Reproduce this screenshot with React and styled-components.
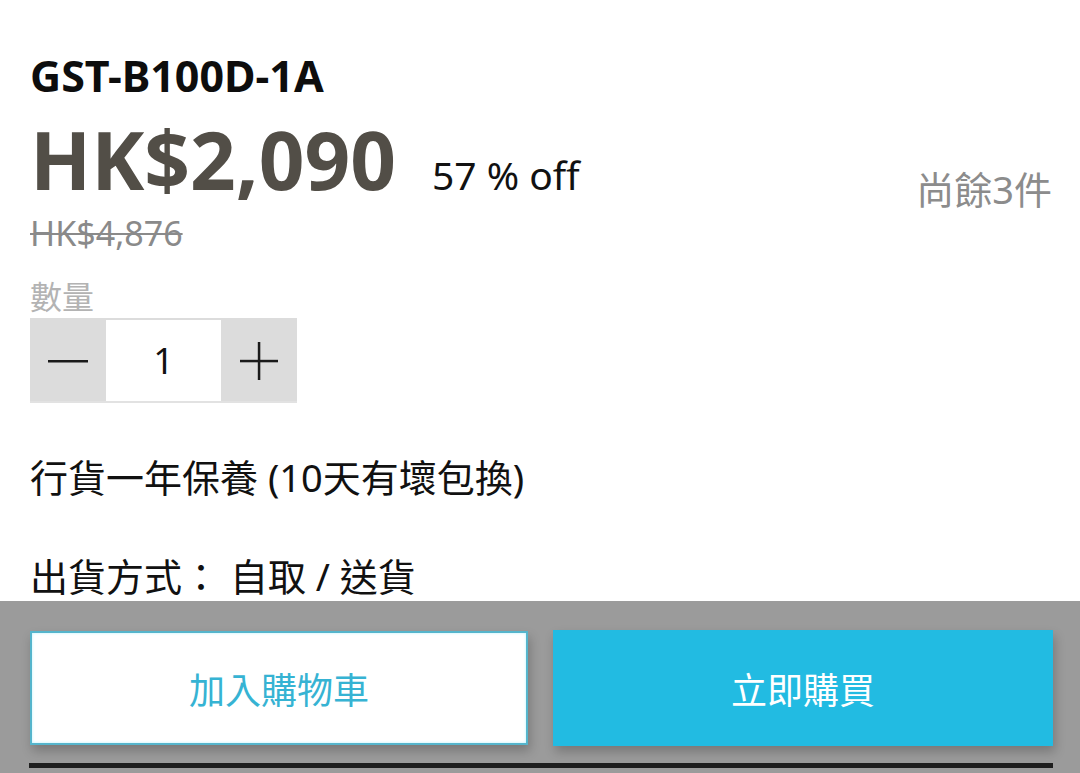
import styled, { createGlobalStyle } from 'styled-components';

const GlobalStyle = createGlobalStyle`
  html, body {
    margin: 0;
    padding: 0;
    background: #ffffff;
  }
  body {
    font-family: 'Noto Sans', 'Noto Sans CJK TC', sans-serif;
    color: #111111;
  }
`;

const Page = styled.div`
  width: 1080px;
  height: 773px;
  display: flex;
  flex-direction: column;
  overflow: hidden;
`;

const Content = styled.div`
  flex: 1;
  padding: 48px 28px 0 30px;
  display: flex;
  flex-direction: column;
`;

const Model = styled.h1`
  margin: 0;
  font-size: 43px;
  line-height: 56px;
  font-weight: 700;
  color: #0d0d0d;
`;

const PriceRow = styled.div`
  display: flex;
  align-items: baseline;
  margin-top: 10px;
  height: 90px;
`;

const Price = styled.span`
  font-size: 80px;
  line-height: 90px;
  font-weight: 700;
  color: #524e47;
`;

const Discount = styled.span`
  font-size: 39px;
  margin-left: 36px;
  color: #111111;
`;

const Stock = styled.span`
  margin-left: auto;
  font-size: 38px;
  color: #8c8c8c;
  position: relative;
  top: 14px;
`;

const OldPrice = styled.div`
  margin-top: 9px;
  font-size: 34px;
  line-height: 40px;
  color: #8a8a8a;
  text-decoration: line-through;
  text-decoration-thickness: 2px;
`;

const Label = styled.div`
  margin-top: 24px;
  font-size: 32px;
  line-height: 40px;
  color: #b3b3b3;
`;

const Stepper = styled.div`
  display: flex;
  width: 267px;
  height: 81px;
  margin-top: 1px;
  border-top: 2px solid #dcdcdc;
  border-bottom: 2px solid #e2e2e2;
`;

const StepButton = styled.div`
  width: 76px;
  background: #dcdcdc;
  display: flex;
  align-items: center;
  justify-content: center;
`;

const Qty = styled.div`
  flex: 1;
  display: flex;
  align-items: center;
  justify-content: center;
  font-size: 36px;
  color: #111111;
`;

const Info = styled.div`
  font-size: 38px;
  line-height: 48px;
  color: #111111;
  margin-top: ${(p) => p.$gap}px;
`;

const BottomBar = styled.div`
  height: 172px;
  background: #9b9b9b;
  padding: 29px 27px 0 30px;
  box-sizing: border-box;
  display: flex;
  flex-direction: column;
`;

const Buttons = styled.div`
  display: flex;
  align-items: center;
  gap: 25px;
`;

const ActionButton = styled.button`
  box-sizing: border-box;
  width: ${(p) => (p.$primary ? 500 : 498)}px;
  height: ${(p) => (p.$primary ? 116 : 114)}px;
  border: ${(p) => (p.$primary ? 'none' : '2px solid #55b5cc')};
  background: ${(p) => (p.$primary ? '#22bbe2' : '#ffffff')};
  color: ${(p) => (p.$primary ? '#ffffff' : '#36b3d3')};
  box-shadow: ${(p) =>
    p.$primary
      ? '2px 6px 10px rgba(0, 0, 0, 0.22)'
      : 'inset 0 0 3px #b8f2ff, 2px 6px 10px rgba(0, 0, 0, 0.22)'};
  font-family: 'Noto Sans CJK TC', 'Noto Sans', sans-serif;
  font-size: 36px;
  padding: 0;
  cursor: pointer;
`;

const Rule = styled.div`
  height: 5px;
  background: #1e1e1e;
  margin-top: 17px;
  margin-left: -1px;
`;

const Minus = () => (
  <svg width="40" height="4" viewBox="0 0 40 4">
    <rect x="0" y="1" width="40" height="2.5" fill="#1a1a1a" />
  </svg>
);

const Plus = () => (
  <svg width="38" height="38" viewBox="0 0 38 38">
    <rect x="0" y="17.8" width="38" height="2.5" fill="#1a1a1a" />
    <rect x="17.8" y="0" width="2.5" height="38" fill="#1a1a1a" />
  </svg>
);

export default function App() {
  return (
    <Page>
      <GlobalStyle />
      <Content>
        <Model>GST-B100D-1A</Model>
        <PriceRow>
          <Price>HK$2,090</Price>
          <Discount>57 % off</Discount>
          <Stock>尚餘3件</Stock>
        </PriceRow>
        <OldPrice>HK$4,876</OldPrice>
        <Label>數量</Label>
        <Stepper>
          <StepButton>
            <Minus />
          </StepButton>
          <Qty>1</Qty>
          <StepButton>
            <Plus />
          </StepButton>
        </Stepper>
        <Info $gap={50}>行貨一年保養 (10天有壞包換)</Info>
        <Info $gap={51}>出貨方式： 自取 / 送貨</Info>
      </Content>
      <BottomBar>
        <Buttons>
          <ActionButton>加入購物車</ActionButton>
          <ActionButton $primary>立即購買</ActionButton>
        </Buttons>
        <Rule />
      </BottomBar>
    </Page>
  );
}
